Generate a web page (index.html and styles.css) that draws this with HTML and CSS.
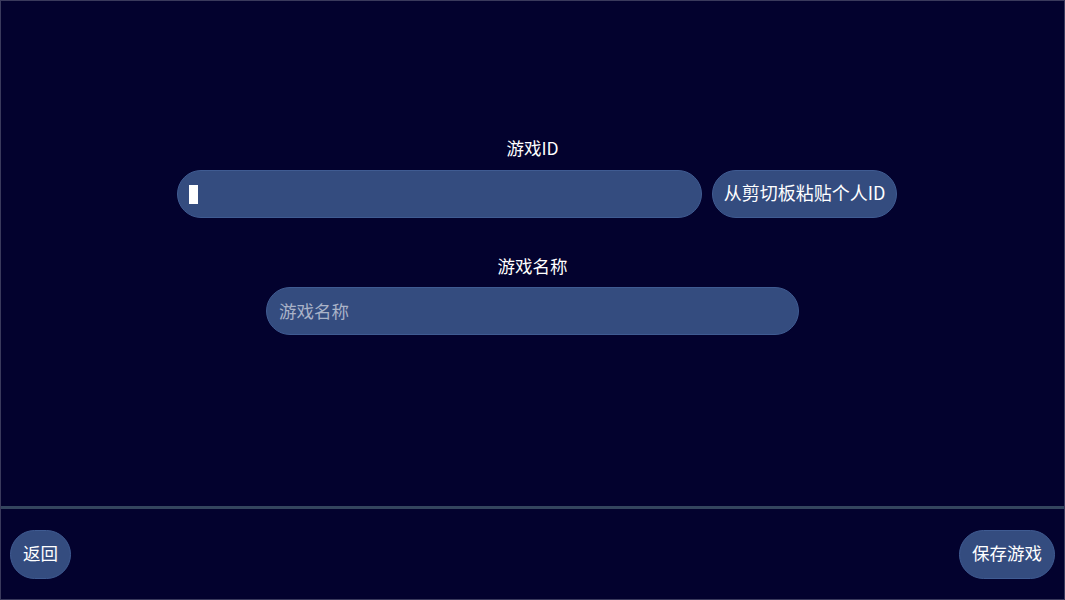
FILE: index.html
```html
<!DOCTYPE html>
<html lang="zh">
<head>
<meta charset="utf-8">
<title>游戏</title>
<link rel="stylesheet" href="styles.css">
</head>
<body>
<div class="app">
  <main class="main">
    <div class="label">游戏ID</div>
    <div class="id-row">
      <div class="field field-id"><span class="cursor"></span></div>
      <button class="pill paste">从剪切板粘贴个人ID</button>
    </div>
    <div class="label label-name">游戏名称</div>
    <div class="field field-name"><span class="placeholder">游戏名称</span></div>
  </main>
  <div class="divider"></div>
  <footer class="footer">
    <button class="pill back">返回</button>
    <button class="pill save">保存游戏</button>
  </footer>
</div>
</body>
</html>
```

FILE: styles.css
```css
html, body {
  margin: 0;
  padding: 0;
  background: #03022e;
}
.app {
  width: 1065px;
  height: 600px;
  box-sizing: border-box;
  border: 1px solid #3a3a5c;
  background: #03022e;
  display: flex;
  flex-direction: column;
  font-family: "Noto Sans CJK SC", "Noto Sans", sans-serif;
  color: #ffffff;
  font-size: 17.5px;
  font-weight: 400;
}
.main {
  height: 505px;
  display: flex;
  flex-direction: column;
  align-items: center;
  padding-top: 136px;
  box-sizing: border-box;
}
.label {
  height: 22px;
  line-height: 22px;
  text-align: center;
  margin-bottom: 11px;
}
.label-name {
  margin-top: 37px;
  margin-bottom: 10px;
}
.id-row {
  display: flex;
  gap: 10px;
  padding-left: 9px;
}
.field {
  height: 48px;
  box-sizing: border-box;
  border-radius: 24px;
  background: #344c7f;
  border: 1px solid #3f5b92;
  display: flex;
  align-items: center;
}
.field-id {
  width: 525px;
  padding-left: 11px;
}
.cursor {
  display: block;
  width: 9px;
  height: 19px;
  background: #ffffff;
}
.field-name {
  width: 533px;
  padding-left: 12px;
}
.placeholder {
  color: #aab3c8;
  margin-top: -2px;
}
.pill {
  font: inherit;
  color: #ffffff;
  background: #344c7f;
  border: 1px solid #3f5b92;
  height: 49px;
  border-radius: 25px;
  padding: 0 0 4px;
  display: flex;
  align-items: center;
  justify-content: center;
}
.paste {
  width: 185px;
  height: 48px;
  border-radius: 24px;
  font-size: 18px;
}
.divider {
  height: 3px;
  background: #34455e;
}
.footer {
  flex: 1;
  display: flex;
  justify-content: space-between;
  align-items: flex-start;
  padding: 21px 9px 0;
}
.back {
  width: 61px;
}
.save {
  width: 96px;
}
```
